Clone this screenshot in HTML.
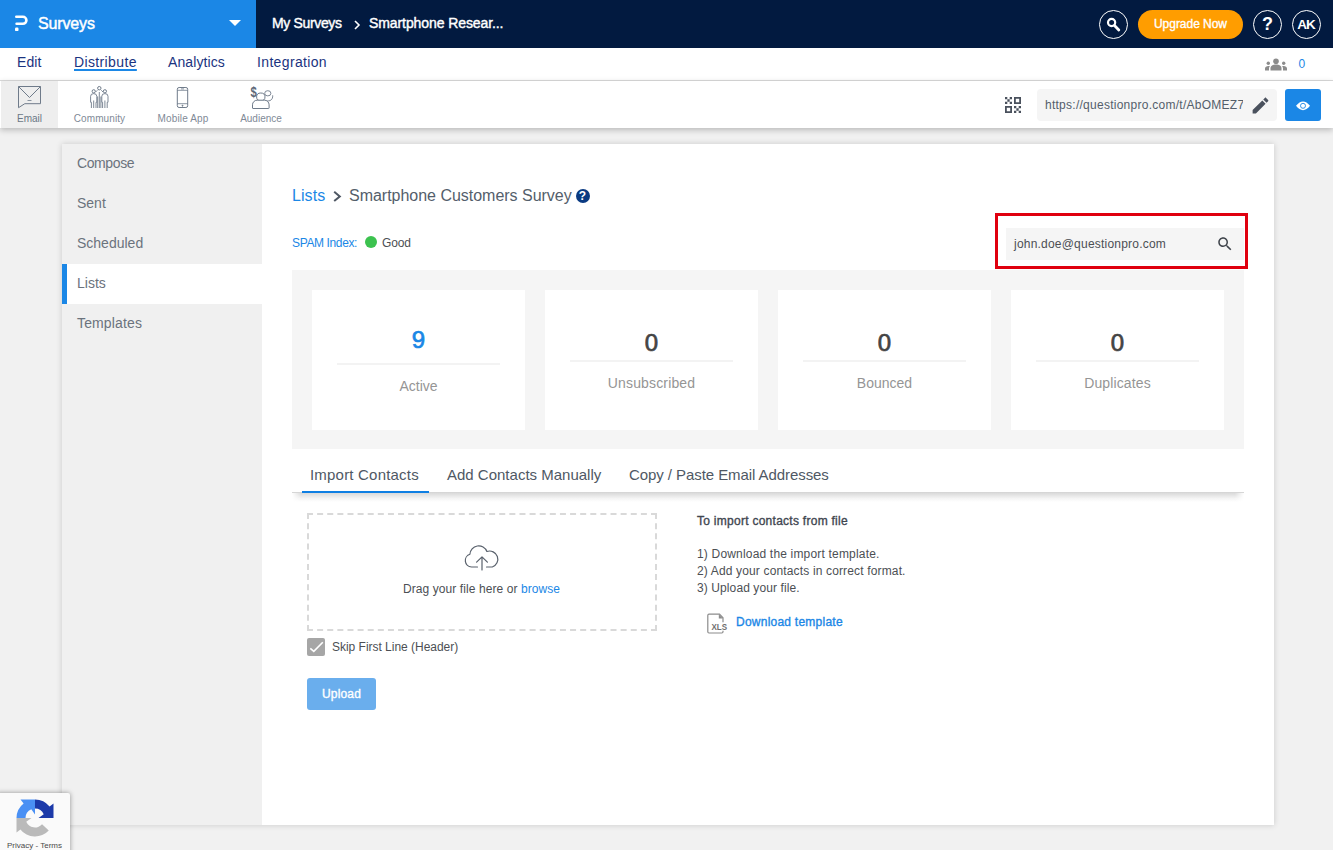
<!DOCTYPE html>
<html lang="en">
<head>
<meta charset="utf-8">
<title>Lists - Smartphone Customers Survey</title>
<style>
*{box-sizing:border-box;margin:0;padding:0}
html,body{width:1333px;height:850px;overflow:hidden}
body{font-family:"Liberation Sans",sans-serif;background:#f1f1f1;color:#545e6b;position:relative;font-size:13px}
.abs{position:absolute;white-space:nowrap}
/* top bar */
#top{position:absolute;left:0;top:0;width:1333px;height:48px;background:#021a40}
#prod{position:absolute;left:0;top:0;width:256px;height:48px;background:#1b87e6}
#prod .name{position:absolute;left:38px;top:14px;font-size:16px;line-height:20px;color:#fff;-webkit-text-stroke:.45px #fff}
#prod .caret{position:absolute;left:228.500px;top:20px;width:0;height:0;border-left:6px solid transparent;border-right:6px solid transparent;border-top:6.500px solid #fff}
.crumb{color:#fff;font-size:14px;line-height:20px;top:13px;-webkit-text-stroke:.4px #fff}
.circ{position:absolute;top:10px;width:29px;height:29px;border:1px solid #fff;border-radius:50%;color:#fff;text-align:center}
#upg{position:absolute;left:1138px;top:10px;width:105px;height:29px;border-radius:14.500px;background:#ff9d00;color:#fff;font-size:12px;line-height:29px;text-align:center;-webkit-text-stroke:.35px #fff}
/* tabs row */
#tabs{position:absolute;left:0;top:48px;width:1333px;height:33px;background:#fff;border-bottom:1px solid #dcdcdc}
#tabs .t{position:absolute;top:5px;font-size:14px;line-height:18px;color:#1b3380}
#tabs .t.on{text-decoration:underline;text-decoration-color:#1b87e6;text-decoration-thickness:1.600px;text-underline-offset:1.600px}
/* icon row */
#icons{position:absolute;left:0;top:81px;width:1333px;height:47px;background:#fff;box-shadow:0 2px 6px rgba(0,0,0,.24)}
#icons .c{position:absolute;top:0;height:47px;text-align:center;font-size:10px;color:#7f8a97}
#icons .c span{position:absolute;left:0;right:0;top:32px;line-height:12px}
#icons .c svg{position:absolute;top:3px}
#url{position:absolute;left:1037px;top:8px;width:240px;height:32px;background:#f5f5f5;border-radius:4px}
#url span{position:absolute;left:8px;top:8px;font-size:12px;line-height:16px;color:#545e6b;width:198px;overflow:hidden;white-space:nowrap}
#eye{position:absolute;left:1285px;top:8px;width:36px;height:32px;background:#1b87e6;border-radius:3px}
/* main */
#wrap{position:absolute;left:62px;top:144px;width:1212px;height:681px;background:#fff;box-shadow:0 0 6px rgba(0,0,0,.17)}
#side{position:absolute;left:0;top:0;width:200px;height:681px;background:#f0f0f0}
#side .i{position:absolute;left:0;width:200px;height:40px;padding-left:15px;font-size:14px;line-height:38px;color:#6b737d}
#side .i.on{background:#fff;border-left:5px solid #1b87e6;padding-left:10px}

#main{position:absolute;left:200px;top:0;width:1012px;height:682px}
.m{position:absolute;white-space:nowrap}
#stats{position:absolute;left:292px;top:270px;width:952px;height:179px;background:#f5f5f5}
.card{position:absolute;top:20px;width:213px;height:140px;background:#fff;text-align:center}
.card .n{position:absolute;left:0;right:0;top:38px;font-size:24px;line-height:30px;color:#444;-webkit-text-stroke:.7px #444}
.card .l{position:absolute;left:25px;right:25px;top:70px;height:2px;background:#f3f3f3}
.card .t{position:absolute;left:0;right:0;top:84px;font-size:14px;line-height:18px;color:#959595}
.card.a .n{top:35px;color:#1b87e6;-webkit-text-stroke:.7px #1b87e6}
.card.a .l{top:73px}
.card.a .t{top:87px}
.tab{position:absolute;top:465px;font-size:15px;line-height:20px;color:#4f5864;white-space:nowrap}
.p12{position:absolute;font-size:12px;line-height:18px;color:#4c4f54;white-space:nowrap}
</style>
</head>
<body>
<div id="top">
  <div id="prod">
    <svg class="abs" style="left:14px;top:14px" width="16" height="19" viewBox="0 0 16 19"><path d="M2.300 2.800h6.600a3.500 3.500 0 0 1 0 7H2.600" fill="none" stroke="#fff" stroke-width="2.600" stroke-linecap="round"/><rect x="1" y="13.600" width="3.500" height="3.500" rx="1.200" fill="#fff"/></svg>
    <div class="name" style="letter-spacing:-.15px">Surveys</div>
    <div class="caret"></div>
  </div>
  <div class="abs crumb" style="left:272px;letter-spacing:-.35px">My Surveys</div>
  <svg class="abs" style="left:352.500px;top:18.700px" width="8" height="12" viewBox="0 0 8 12"><path d="M2 2l4 4-4 4" fill="none" stroke="#fff" stroke-width="1.6"/></svg>
  <div class="abs crumb" style="left:369px;letter-spacing:-.09px">Smartphone Resear...</div>
  <div class="circ" style="left:1099px"><svg class="abs" style="left:0;top:0" width="27" height="27" viewBox="0 0 27 27"><circle cx="11.600" cy="11.500" r="3.600" fill="none" stroke="#fff" stroke-width="2.200"/><path d="M14.500 14.500l4.300 4.400" stroke="#fff" stroke-width="2.800" stroke-linecap="round"/></svg></div>
  <div id="upg" style="letter-spacing:-.03px">Upgrade Now</div>
  <div class="circ" style="left:1253px;font-size:18px;line-height:27px;font-weight:bold">?</div>
  <div class="circ" style="left:1292px;font-size:13.500px;line-height:28px;font-weight:bold;letter-spacing:-1.100px;text-indent:-1px">AK</div>
</div>
<div id="tabs">
  <div class="t" style="left:17px;letter-spacing:.12px">Edit</div>
  <div class="t on" style="left:74px;letter-spacing:.37px">Distribute</div>
  <div class="t" style="left:168px;letter-spacing:.09px">Analytics</div>
  <div class="t" style="left:257px;letter-spacing:.35px">Integration</div>
  <svg class="abs" style="left:1265px;top:10px" width="22" height="13" viewBox="0 0 22 13"><g fill="#8c8c8c"><circle cx="11" cy="3.200" r="2.800"/><path d="M5.500 12.500v-2.300c0-2.400 2.400-3.700 5.500-3.700s5.500 1.300 5.500 3.700v2.300z"/><circle cx="3.300" cy="5.300" r="1.700"/><path d="M0 12.500v-2c0-1.700 1.500-2.600 3.400-2.600.5 0 1 .1 1.500.2-.6.700-.9 1.500-.9 2.400v2z"/><circle cx="18.700" cy="5.300" r="1.700"/><path d="M22 12.500v-2c0-1.700-1.500-2.600-3.400-2.600-.5 0-1 .1-1.500.2.600.7.900 1.500.9 2.400v2z"/></g></svg>
  <div class="abs" style="left:1298.500px;top:9px;font-size:12px;line-height:14px;color:#1b87e6">0</div>
</div>
<div id="icons">
  <div class="c" style="left:1px;width:57px;background:#eee;color:#6b7785"><span>Email</span></div>
  <div class="c" style="left:58px;width:83px"><span style="letter-spacing:.09px">Community</span></div>
  <div class="c" style="left:141px;width:84px"><span style="letter-spacing:.15px">Mobile App</span></div>
  <div class="c" style="left:225px;width:72px"><span>Audience</span></div>
<svg class="abs" style="left:0;top:0" width="1333" height="47" viewBox="0 81 1333 47">
  <g fill="none" stroke="#6f7b8a" stroke-width="1">
    <path d="M18.500 86.500H40.500V103.700H24.800L18.500 107.700Z"/><path d="M18.500 86.500L29.500 97.500L40.500 86.500"/><path d="M27.500 100.500h4" stroke-width=".8"/>
    <circle cx="99.300" cy="88.200" r="1.700"/><path d="M99.300 92V108M97.700 96.500V108M100.900 96.500V108M97.300 90.300L95.600 92M101.300 90.300L103 92" stroke-width=".9"/>
    <circle cx="93.700" cy="91.300" r="1.600"/><path d="M90.600 102.300V96.300Q90.600 93.600 93.700 93.600Q96.800 93.600 96.800 96.300V102.300M91.400 102.300V108M93.700 100.500V108M96 102.300V108M90.600 102.300h.8M96 102.300h.8" stroke-width=".9"/>
    <circle cx="104.900" cy="91.300" r="1.600"/><path d="M101.800 102.300V96.300Q101.800 93.600 104.900 93.600Q108 93.600 108 96.300V102.300M102.600 102.300V108M104.900 100.500V108M107.200 102.300V108M101.800 102.300h.8M107.200 102.300h.8" stroke-width=".9"/>
    <rect x="177.300" y="87.500" width="10.400" height="20" rx="1.800"/><path d="M177.300 90.300h10.400M177.300 103.700h10.400M181 88.900h3" stroke-width=".8"/><circle cx="182.500" cy="105.700" r=".5" fill="#6f7b8a"/>
    <ellipse cx="267.800" cy="93.300" rx="3.100" ry="2.600" stroke-width=".9"/><path d="M266 100.800c4 .6 7-.8 6.700-5.500" stroke-width=".9"/>
    <ellipse cx="260.800" cy="96.900" rx="4.200" ry="3.900" fill="#fff"/><path d="M252.500 108v-3.200a4.600 4.600 0 0 1 4.600-4.600h7.400a4.600 4.600 0 0 1 4.600 4.600v3.200a.5.500 0 0 1-.5.500h-15.600a.5.500 0 0 1-.5-.5z" fill="#fff"/>
  </g>
  <text x="250.600" y="97.300" font-family="Liberation Sans, sans-serif" font-size="14" font-weight="bold" fill="#5d6978" textLength="6.300" lengthAdjust="spacingAndGlyphs">$</text>
  <g fill="#4a515d">
    <path d="M1005 97h2.300v2.300h-2.300zM1009.700 97h2.300v2.300h-2.300zM1007.350 99.350h2.300v2.300h-2.300zM1005 101.700h2.300v2.300h-2.300zM1009.700 101.700h2.300v2.300h-2.300z"/>
    <path d="M1014 106h2.300v2.300h-2.300zM1018.700 106h2.300v2.300h-2.300zM1016.350 108.350h2.300v2.300h-2.300zM1014 110.700h2.300v2.300h-2.300zM1018.700 110.700h2.300v2.300h-2.300z"/>
    <path d="M1014 97h7v7h-7zM1015.800 98.800v3.400h3.400v-3.400z" fill-rule="evenodd"/>
    <path d="M1005 106h7v7h-7zM1006.800 107.800v3.400h3.400v-3.400z" fill-rule="evenodd"/>
  </g>
</svg>
  <div id="url"><span style="letter-spacing:.26px">https://questionpro.com/t/AbOMEZ7</span></div>
  <svg class="abs" style="left:1250px;top:14px" width="21" height="21" viewBox="0 0 24 24"><path fill="#4a515d" d="M3 17.250V21h3.750L17.810 9.940l-3.750-3.750L3 17.250zM20.710 7.040c.39-.39.390-1.020 0-1.410l-2.340-2.340c-.39-.39-1.020-.39-1.410 0l-1.830 1.830 3.750 3.750 1.830-1.830z"/></svg>
  <div id="eye"><svg class="abs" style="left:10px;top:11px" width="16" height="11" viewBox="0 0 16 11"><path d="M1 5.800Q8 -3 15 5.800Q8 14.500 1 5.800z" fill="#fff"/><circle cx="8" cy="5.800" r="2.500" fill="#fff" stroke="#1b87e6" stroke-width=".9"/></svg></div>
</div>
<div id="wrap">
  <div id="side">
    <div class="i" style="top:0;letter-spacing:-.4px">Compose</div>
    <div class="i" style="top:40px">Sent</div>
    <div class="i" style="top:80px">Scheduled</div>
    <div class="i on" style="top:120px">Lists</div>
    <div class="i" style="top:160px;letter-spacing:.14px">Templates</div>
  </div>
</div>

<div class="m" style="left:292px;top:186px;font-size:16px;line-height:20px;color:#1b87e6;letter-spacing:.06px">Lists</div>
<svg class="m" style="left:332px;top:190px" width="11" height="13" viewBox="0 0 11 13"><path d="M2.200 1.800L7.800 6.400L2.200 11" fill="none" stroke="#4f5864" stroke-width="2"/></svg>
<div class="m" style="left:349px;top:186px;font-size:16px;line-height:20px;color:#545e6b;letter-spacing:-.02px">Smartphone Customers Survey</div>
<div class="m" style="left:575.500px;top:189px;width:14px;height:14px;border-radius:50%;background:#0a3a82;color:#fff;font-size:12px;line-height:14.500px;font-weight:bold;text-align:center">?</div>
<div class="p12" style="left:292px;top:234px;color:#1b87e6;letter-spacing:-.37px">SPAM Index:</div>
<div class="m" style="left:365px;top:236px;width:12px;height:12px;border-radius:50%;background:#3cc24f"></div>
<div class="p12" style="left:382px;top:234px;letter-spacing:-.15px">Good</div>
<div class="m" style="left:995px;top:213px;width:253px;height:56px;border:3px solid #e0000f"></div>
<div class="m" style="left:1006px;top:228px;width:238px;height:32px;background:#f5f5f5"></div>
<div class="p12" style="left:1014px;top:235px;letter-spacing:.21px">john.doe@questionpro.com</div>
<svg class="m" style="left:1216px;top:235.300px" width="18" height="18" viewBox="0 0 24 24"><path fill="#3f444b" d="M15.500 14h-.79l-.28-.27C15.410 12.590 16 11.110 16 9.500 16 5.910 13.090 3 9.500 3S3 5.910 3 9.500 5.910 16 9.500 16c1.610 0 3.090-.59 4.230-1.570l.27.28v.79l5 4.990L20.490 19l-4.990-5zm-6 0C7.010 14 5 11.990 5 9.500S7.010 5 9.500 5 14 7.010 14 9.500 11.990 14 9.500 14z"/></svg>
<div id="stats">
  <div class="card a" style="left:20px"><div class="n">9</div><div class="l"></div><div class="t">Active</div></div>
  <div class="card" style="left:253px"><div class="n">0</div><div class="l"></div><div class="t" style="letter-spacing:.15px">Unsubscribed</div></div>
  <div class="card" style="left:486px"><div class="n">0</div><div class="l"></div><div class="t">Bounced</div></div>
  <div class="card" style="left:719px"><div class="n">0</div><div class="l"></div><div class="t" style="letter-spacing:.13px">Duplicates</div></div>
</div>
<div class="m" style="left:292px;top:492px;width:952px;height:1px;background:#d6d6d6"></div>
<div class="m" style="left:292px;top:493px;width:952px;height:9px;background:linear-gradient(#dadada 0,#e7e7e7 30%,#f5f5f5 62%,#fff 100%);-webkit-mask-image:linear-gradient(90deg,transparent 0,#000 9px,#000 943px,transparent 952px);mask-image:linear-gradient(90deg,transparent 0,#000 9px,#000 943px,transparent 952px)"></div>
<div class="tab" style="left:310px;letter-spacing:.2px">Import Contacts</div>
<div class="m" style="left:302px;top:491px;width:127px;height:2px;background:#0f7fe3"></div>
<div class="tab" style="left:447px">Add Contacts Manually</div>
<div class="tab" style="left:629px;letter-spacing:-.07px">Copy / Paste Email Addresses</div>
<div class="m" style="left:307px;top:513px;width:350px;height:118px;border:2px dashed #d9d9d9"></div>
<svg class="m" style="left:460px;top:540px" width="45" height="35" viewBox="460 540 45 35"><g fill="none" stroke="#59616c" stroke-width="1.200" stroke-linecap="round" stroke-linejoin="round"><path d="M477.500 567H471.500A6.500 6.500 0 0 1 469.900 554.300A8.800 8.800 0 0 1 486.900 551.500A8.200 8.200 0 1 1 492.300 567H486.500"/><path d="M482 570V556.800M476.600 562.200L482 556.800L487.400 562.200"/></g></svg>
<div class="p12" style="left:403px;top:580px;letter-spacing:.08px">Drag your file here or <span style="color:#1b87e6">browse</span></div>
<div class="m" style="left:307px;top:638px;width:18px;height:18px;border-radius:2px;background:#a6a6a6"></div>
<svg class="m" style="left:307px;top:638px" width="18" height="18" viewBox="0 0 18 18"><path d="M3.300 10.300L6.800 13.300L15.800 4.300" fill="none" stroke="#fff" stroke-width="1.600"/></svg>
<div class="p12" style="left:332px;top:638px;letter-spacing:-.02px">Skip First Line (Header)</div>
<div class="m" style="left:307px;top:678px;width:69px;height:32px;border-radius:3px;background:#6aaeed;color:#fff;font-size:12px;line-height:33px;-webkit-text-stroke:.35px #fff;text-align:center;letter-spacing:.18px">Upload</div>
<div class="p12" style="left:697px;top:512px;-webkit-text-stroke:.35px #3f4650;color:#3f4650;letter-spacing:.27px">To import contacts from file</div>
<div class="p12" style="left:697px;top:545px;letter-spacing:.18px">1) Download the import template.</div>
<div class="p12" style="left:697px;top:562px;letter-spacing:.15px">2) Add your contacts in correct format.</div>
<div class="p12" style="left:697px;top:579px;letter-spacing:.1px">3) Upload your file.</div>
<svg class="m" style="left:704px;top:610px" width="28" height="28" viewBox="704 610 28 28"><path d="M709 614.200H719.500L723 617.800V622.200M723 630.800V631.800a1.200 1.200 0 0 1-1.200 1.200H709a1.200 1.200 0 0 1-1.200-1.200V615.400a1.200 1.200 0 0 1 1.200-1.200" fill="none" stroke="#8c8c8c" stroke-width="1.200"/><path d="M718.800 614.300V618.500H723z" fill="#8c8c8c"/><text x="711.400" y="629.800" font-family="Liberation Sans, sans-serif" font-size="9.500" font-weight="bold" fill="#6e6e6e" textLength="15.600" lengthAdjust="spacingAndGlyphs">XLS</text></svg>
<div class="p12" style="left:736px;top:613px;-webkit-text-stroke:.35px #1b87e6;color:#1b87e6;letter-spacing:.24px">Download template</div>
<div class="m" style="left:-4px;top:793px;width:74px;height:64px;background:#fafafa;border-radius:2px;box-shadow:0 0 5px rgba(0,0,0,.4)"></div>
<svg class="m" style="left:10px;top:795px" width="50" height="46" viewBox="10 795 50 46"><path d="M16.50 818.00 A18.5 18.5 0 0 1 23.61 803.42 L20.5 799.5 H35 V814.5 L31.29 809.26 A9.5 9.5 0 0 0 25.50 818.00 Z" fill="#4a90f4"/><path d="M35.00 799.50 A18.5 18.5 0 0 1 49.58 806.61 L53.5 803.5 V818 H38.5 L43.74 814.29 A9.5 9.5 0 0 0 35.00 808.50 Z" fill="#1c3aa9"/><path d="M48.75 830.38 A18.5 18.5 0 0 1 20.42 829.39 L16.5 832.5 V818 H31.5 L26.26 821.71 A9.5 9.5 0 0 0 42.06 824.36 Z" fill="#bababa"/></svg>
<div class="m" style="left:7px;top:841px;font-size:8px;line-height:10px;color:#4a4a4a">Privacy - Terms</div>
</body>
</html>
